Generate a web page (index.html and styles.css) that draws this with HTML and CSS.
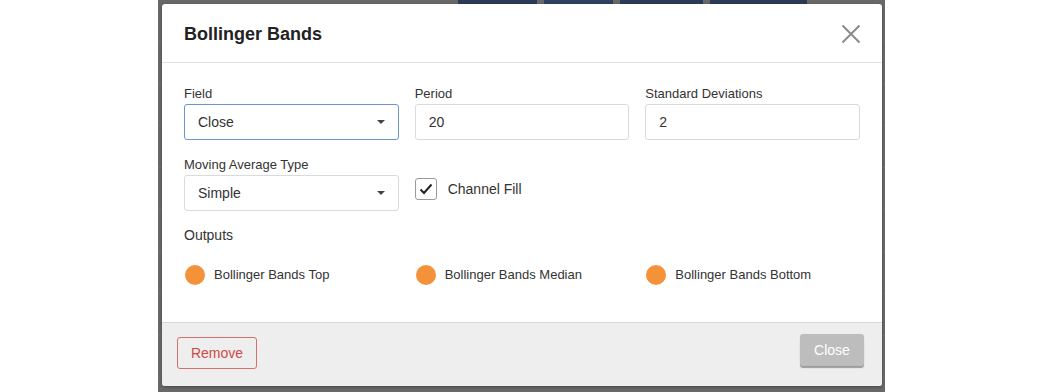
FILE: index.html
```html
<!DOCTYPE html>
<html lang="en">
<head>
<meta charset="utf-8">
<title>Bollinger Bands</title>
<link rel="stylesheet" href="styles.css">
</head>
<body>
<div class="stage">
  <div class="modal">
    <div class="modal-header">
      <h2 class="modal-title">Bollinger Bands</h2>
      <button class="close-x" aria-label="Close">
        <svg width="20" height="20" viewBox="0 0 20 20"><path d="M1.5 1.5L18.5 18.5M18.5 1.5L1.5 18.5" stroke="#8a8a8a" stroke-width="2" fill="none"/></svg>
      </button>
    </div>
    <div class="modal-body">
      <div class="fields">
        <div class="field">
          <label class="label">Field</label>
          <div class="select focused">
            <span class="select-value">Close</span>
            <svg class="caret" width="8" height="4" viewBox="0 0 8 4"><path d="M0 0H8L4 4Z" fill="#444"/></svg>
          </div>
        </div>
        <div class="field">
          <label class="label">Period</label>
          <input class="input" type="text" value="20">
        </div>
        <div class="field">
          <label class="label">Standard Deviations</label>
          <input class="input" type="text" value="2">
        </div>
        <div class="field">
          <label class="label">Moving Average Type</label>
          <div class="select">
            <span class="select-value">Simple</span>
            <svg class="caret" width="8" height="4" viewBox="0 0 8 4"><path d="M0 0H8L4 4Z" fill="#444"/></svg>
          </div>
        </div>
        <div class="field check-field">
          <span class="checkbox">
            <svg width="14" height="12" viewBox="0 0 14 12"><path d="M1.5 6.5L5 10L12.5 1.5" stroke="#222" stroke-width="2" fill="none"/></svg>
          </span>
          <span class="check-label">Channel Fill</span>
        </div>
      </div>
      <div class="outputs-title">Outputs</div>
      <div class="outputs">
        <div class="output"><span class="swatch"></span><span>Bollinger Bands Top</span></div>
        <div class="output"><span class="swatch"></span><span>Bollinger Bands Median</span></div>
        <div class="output"><span class="swatch"></span><span>Bollinger Bands Bottom</span></div>
      </div>
    </div>
    <div class="modal-footer">
      <button class="btn-remove">Remove</button>
      <button class="btn-close">Close</button>
    </div>
  </div>
</div>
</body>
</html>
```

FILE: styles.css
```css
* { box-sizing: border-box; }

html, body {
  margin: 0;
  padding: 0;
  background: #ffffff;
  font-family: "Liberation Sans", Arial, sans-serif;
  color: #333333;
}

.stage {
  margin-left: 158px;
  width: 727px;
  height: 392px;
  padding: 4px 3px 6px 4px;
  background:
    linear-gradient(#2b3b56, #2b3b56) 300px 0 / 79px 4px no-repeat,
    linear-gradient(#2f4060, #2f4060) 386px 0 / 69px 4px no-repeat,
    linear-gradient(#2b3b56, #2b3b56) 462px 0 / 83px 4px no-repeat,
    linear-gradient(#2b3b56, #2b3b56) 552px 0 / 97px 4px no-repeat,
    repeating-linear-gradient(to bottom, transparent 0 41px, rgba(255,255,255,0.05) 41px 42px),
    #686868;
}

.modal {
  width: 720px;
  height: 382px;
  background: #ffffff;
  border-radius: 3px;
  box-shadow: 0 1px 3px rgba(0, 0, 0, 0.35);
  display: flex;
  flex-direction: column;
  overflow: hidden;
}

.modal-header {
  height: 59px;
  flex: none;
  border-bottom: 1px solid #e2e2e2;
  padding: 2px 21px 0 22px;
  display: flex;
  align-items: center;
  justify-content: space-between;
}

.modal-title {
  margin: 0;
  font-size: 18px;
  font-weight: bold;
  color: #222222;
  line-height: 20px;
}

.close-x {
  border: 0;
  background: none;
  padding: 0;
  width: 20px;
  height: 20px;
  display: flex;
  cursor: pointer;
}

.modal-body {
  flex: 1;
  padding: 23px 22px 0;
}

.fields {
  display: grid;
  grid-template-columns: repeat(3, 1fr);
  column-gap: 16px;
  row-gap: 17px;
}

.field {
  display: flex;
  flex-direction: column;
}

.label {
  font-size: 13px;
  line-height: 15px;
  margin-bottom: 3px;
  color: #333333;
}

.select,
.input {
  height: 36px;
  border: 1px solid #dadada;
  border-radius: 3px;
  font-family: inherit;
  font-size: 14px;
  color: #333333;
}

.input {
  width: 100%;
  padding: 0 13px;
  outline: none;
  background: #ffffff;
}

.select {
  position: relative;
  display: flex;
  align-items: center;
  padding: 0 13px;
}

.select.focused {
  border-color: #6b96d2;
}

.caret {
  position: absolute;
  right: 13px;
  top: 15px;
}

.check-field {
  flex-direction: row;
  align-items: center;
  gap: 11px;
  padding-top: 21px;
  align-self: start;
}

.checkbox {
  width: 22px;
  height: 22px;
  border: 1px solid #9a9a9a;
  border-radius: 3px;
  display: flex;
  align-items: center;
  justify-content: center;
}

.check-label {
  font-size: 14px;
  line-height: 16px;
  color: #333333;
}

.outputs-title {
  margin-top: 16px;
  font-size: 14px;
  line-height: 16px;
  color: #333333;
}

.outputs {
  margin-top: 22px;
  display: grid;
  grid-template-columns: repeat(3, 1fr);
  column-gap: 16px;
}

.output {
  display: flex;
  align-items: center;
  gap: 9px;
  font-size: 13px;
  line-height: 20px;
  color: #333333;
  padding-left: 1px;
}

.swatch {
  width: 20px;
  height: 20px;
  border-radius: 50%;
  background: #f4923a;
  flex: none;
}

.modal-footer {
  height: 64px;
  flex: none;
  border-top: 1px solid #d6d6d6;
  background: #eeeeee;
  padding: 11px 18px 0 15px;
  display: flex;
  align-items: flex-start;
  justify-content: space-between;
}

.btn-remove {
  margin-top: 3px;
  width: 80px;
  height: 32px;
  border: 1px solid #d4706b;
  border-radius: 3px;
  background: transparent;
  color: #cc4a44;
  font-family: inherit;
  font-size: 14px;
  padding: 0;
}

.btn-close {
  width: 64px;
  height: 32px;
  border: 0;
  border-radius: 3px;
  background: #bdbdbd;
  color: #ffffff;
  font-family: inherit;
  font-size: 14px;
  padding: 0;
  box-shadow: 0 2px 1px #9c9c9c;
}
```
